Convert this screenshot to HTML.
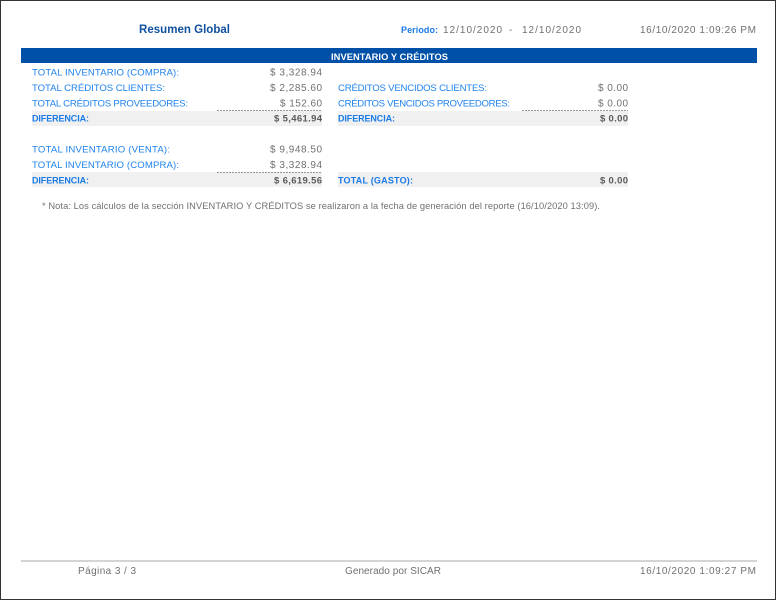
<!DOCTYPE html>
<html lang="es">
<head>
<meta charset="utf-8">
<title>Resumen Global</title>
<style>
html,body{margin:0;padding:0;background:#fff;width:776px;height:600px;overflow:hidden}
svg{display:block}
text{font-family:"Liberation Sans",sans-serif;font-size:10px;white-space:pre}
.t{filter:blur(.3px)}
.b{fill:#2083ec;font-size:9.6px}
.g{fill:#707070}
.bb{fill:#1a7be6;font-weight:bold;font-size:9px}
.gb{fill:#5a5a5a;font-weight:bold;font-size:9.5px}
.d{stroke:#999;stroke-width:1;stroke-dasharray:2 1}
</style>
</head>
<body>
<svg width="776" height="600" viewBox="0 0 776 600" xmlns="http://www.w3.org/2000/svg">
<rect x="0.5" y="0.5" width="775" height="599" fill="#fff" stroke="#333"/>

<rect x="21" y="48" width="736" height="15" fill="#0050a8"/>
<rect x="32" y="111" width="290" height="15" fill="#f0f0f0"/>
<rect x="338" y="111" width="290" height="15" fill="#f0f0f0"/>
<rect x="32" y="172" width="290" height="15" fill="#f0f0f0"/>
<rect x="338" y="172" width="290" height="15" fill="#f0f0f0"/>
<line x1="217" y1="110.5" x2="322" y2="110.5" class="d"/>
<line x1="522" y1="110.5" x2="628" y2="110.5" class="d"/>
<line x1="217" y1="172.5" x2="322" y2="172.5" class="d"/>
<line x1="21" y1="561" x2="757" y2="561" stroke="#aaa" stroke-width="1"/>

<g class="t">
<text x="139" y="33" textLength="91" style="font-size:11.5px;font-weight:bold;fill:#11509f">Resumen Global</text>
<text x="401" y="33" textLength="37" style="font-size:9px;font-weight:bold;fill:#1a7be6">Periodo:</text>
<text x="443" y="33" textLength="59" class="g">12/10/2020</text>
<text x="509" y="33" textLength="5" class="g">-</text>
<text x="522" y="33" textLength="59" class="g">12/10/2020</text>
<text x="640" y="33" textLength="116" class="g">16/10/2020 1:09:26 PM</text>

<text x="331" y="60" textLength="117" style="font-size:9.3px;font-weight:bold;fill:#fff">INVENTARIO Y CRÉDITOS</text>

<text x="32" y="75.5" textLength="147" class="b">TOTAL INVENTARIO (COMPRA):</text>
<text x="270" y="75.5" textLength="52" class="g">$ 3,328.94</text>
<text x="32" y="91" textLength="133" class="b">TOTAL CRÉDITOS CLIENTES:</text>
<text x="270" y="91" textLength="52" class="g">$ 2,285.60</text>
<text x="338" y="91" textLength="149" class="b">CRÉDITOS VENCIDOS CLIENTES:</text>
<text x="598" y="91" textLength="30" class="g">$ 0.00</text>
<text x="32" y="106.5" textLength="156" class="b">TOTAL CRÉDITOS PROVEEDORES:</text>
<text x="280" y="106.5" textLength="42" class="g">$ 152.60</text>
<text x="338" y="106.5" textLength="172" class="b">CRÉDITOS VENCIDOS PROVEEDORES:</text>
<text x="598" y="106.5" textLength="30" class="g">$ 0.00</text>
<text x="32" y="121.5" textLength="57" class="bb">DIFERENCIA:</text>
<text x="274" y="121.5" textLength="48" class="gb">$ 5,461.94</text>
<text x="338" y="121.5" textLength="57" class="bb">DIFERENCIA:</text>
<text x="600" y="121.5" textLength="28" class="gb">$ 0.00</text>

<text x="32" y="152.5" textLength="138" class="b">TOTAL INVENTARIO (VENTA):</text>
<text x="270" y="152.5" textLength="52" class="g">$ 9,948.50</text>
<text x="32" y="168" textLength="147" class="b">TOTAL INVENTARIO (COMPRA):</text>
<text x="270" y="168" textLength="52" class="g">$ 3,328.94</text>
<text x="32" y="183.5" textLength="57" class="bb">DIFERENCIA:</text>
<text x="274" y="183.5" textLength="48" class="gb">$ 6,619.56</text>
<text x="338" y="183.5" textLength="75" class="bb">TOTAL (GASTO):</text>
<text x="600" y="183.5" textLength="28" class="gb">$ 0.00</text>

<text x="42" y="209" textLength="558" style="font-size:9.3px;fill:#707070">* Nota: Los cálculos de la sección INVENTARIO Y CRÉDITOS se realizaron a la fecha de generación del reporte (16/10/2020 13:09).</text>

<text x="78" y="574" textLength="58" class="g">Página 3 / 3</text>
<text x="345" y="574" textLength="96" class="g">Generado por SICAR</text>
<text x="640" y="574" textLength="116" class="g">16/10/2020 1:09:27 PM</text>
</g>
</svg>
</body>
</html>
